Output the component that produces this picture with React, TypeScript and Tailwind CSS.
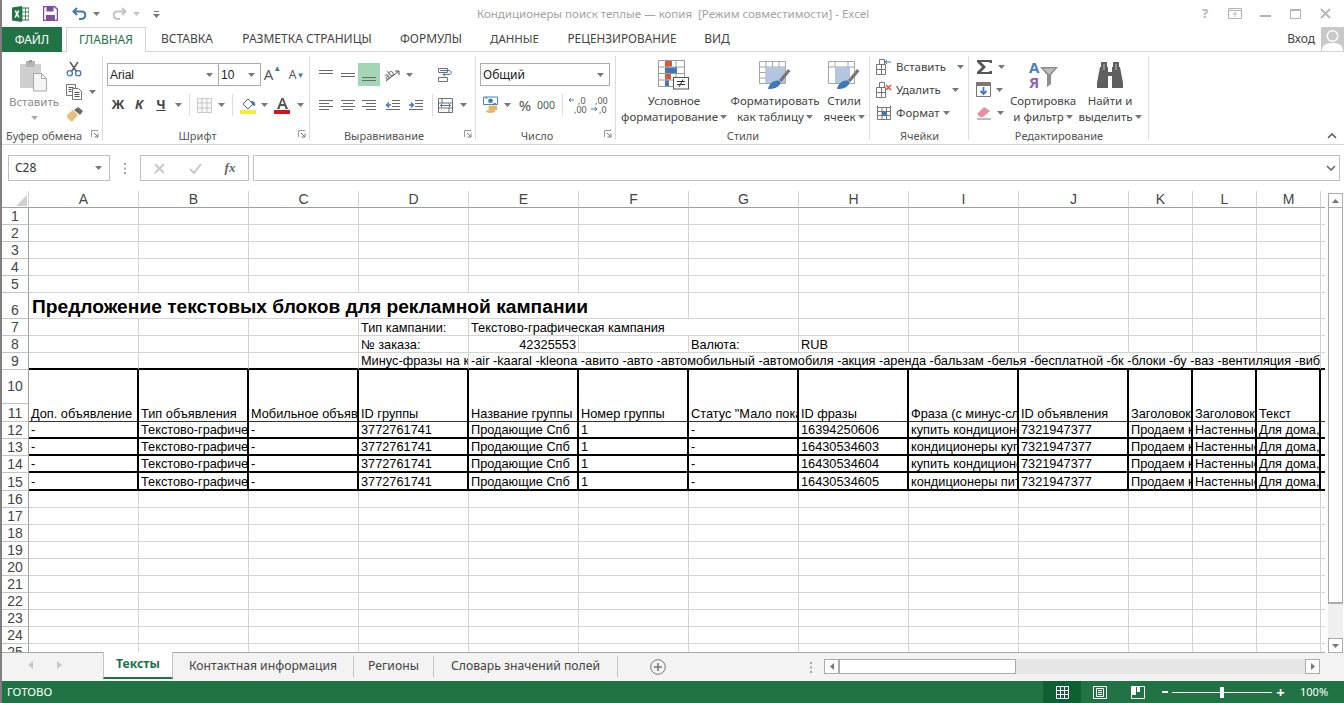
import React from 'react';

const UI = '[font-family:"Noto_Sans",sans-serif]';

const COLS = ['A', 'B', 'C', 'D', 'E', 'F', 'G', 'H', 'I', 'J', 'K', 'L', 'M'];

const HEAD_ROW = ['Доп. объявление', 'Тип объявления', 'Мобильное объявление', 'ID группы', 'Название группы', 'Номер группы', 'Статус "Мало показов"', 'ID фразы', 'Фраза (с минус-словами)', 'ID объявления', 'Заголовок 1', 'Заголовок 2', 'Текст'];
const DATA_ROWS = [
  ['-', 'Текстово-графическое', '-', '3772761741', 'Продающие Спб', '1', '-', '16394250606', 'купить кондиционер', '7321947377', 'Продаем кондиционеры', 'Настенные сплит-системы', 'Для дома, для офиса'],
  ['-', 'Текстово-графическое', '-', '3772761741', 'Продающие Спб', '1', '-', '16430534603', 'кондиционеры купить', '7321947377', 'Продаем кондиционеры', 'Настенные сплит-системы', 'Для дома, для офиса'],
  ['-', 'Текстово-графическое', '-', '3772761741', 'Продающие Спб', '1', '-', '16430534604', 'купить кондиционер', '7321947377', 'Продаем кондиционеры', 'Настенные сплит-системы', 'Для дома, для офиса'],
  ['-', 'Текстово-графическое', '-', '3772761741', 'Продающие Спб', '1', '-', '16430534605', 'кондиционеры питер', '7321947377', 'Продаем кондиционеры', 'Настенные сплит-системы', 'Для дома, для офиса'],
];

const Caret = ({ color = '#777' }: { color?: string }) => (
  <svg width="7" height="4" viewBox="0 0 7 4" className="shrink-0"><path d="M0 0h7L3.5 4z" fill={color} /></svg>
);

const Lines = ({ ys, x1 = 1, x2 = 15, color = '#6a6a6a' }: { ys: number[]; x1?: number; x2?: number; color?: string }) => (
  <svg width="16" height="16" viewBox="0 0 16 16">
    {ys.map((y, i) => <path key={i} d={`M${x1} ${y + 0.5}H${x2}`} stroke={color} />)}
  </svg>
);

const AlignH = ({ mode }: { mode: 'l' | 'c' | 'r' }) => (
  <svg width="16" height="14" viewBox="0 0 16 14">
    <path d="M1 2.5h14M1 8.5h14" stroke="#6a6a6a" />
    {mode === 'l' && <path d="M1 5.5h10M1 11.5h10" stroke="#6a6a6a" />}
    {mode === 'c' && <path d="M3 5.5h10M3 11.5h10" stroke="#6a6a6a" />}
    {mode === 'r' && <path d="M5 5.5h10M5 11.5h10" stroke="#6a6a6a" />}
  </svg>
);

const Indent = ({ out }: { out?: boolean }) => (
  <svg width="16" height="14" viewBox="0 0 16 14">
    <path d="M7 2.5h8M7 5.5h8M7 8.5h8M1 11.5h14" stroke="#6a6a6a" />
    {out ? <path d="M6 7H1.5M4 4.5 1.5 7 4 9.5" stroke="#3e7ab8" strokeWidth="1.4" fill="none" /> : <path d="M1 7h4.5M3 4.5 5.5 7 3 9.5" stroke="#3e7ab8" strokeWidth="1.4" fill="none" />}
  </svg>
);

const Launcher = () => (
  <svg width="8" height="8" viewBox="0 0 8 8"><path d="M.5 7V.5H7" stroke="#9a9a9a" fill="none" /><path d="M3 3l3.5 3.5M7 3.5V7H3.5" stroke="#777" fill="none" /></svg>
);

// one ribbon group, separator on its right edge
function Group({ className, label, launcher, labelClass = 'justify-center', children }: { className: string; label: string; launcher?: boolean; labelClass?: string; children: React.ReactNode }) {
  return (
    <div className={`relative flex flex-col shrink-0 ${className}`}>
      <div className="h-[76px]">{children}</div>
      <div className={`flex h-[16px] items-center text-[11px] text-[#555] ${labelClass}`}>{label}</div>
      {launcher && <div className="absolute right-[4px] bottom-[6px] flex"><Launcher /></div>}
      <div className="absolute right-0 top-[4px] h-[84px] w-px bg-[#dcdcdc]" />
    </div>
  );
}

const Sep = () => <div className="h-[22px] w-px bg-[#dcdcdc]" />;

function BigButton({ className, icon, line1, line2 }: { className: string; icon: React.ReactNode; line1: string; line2: string }) {
  return (
    <div className={`flex flex-col items-center pt-[8px] text-[11.500px] leading-[16px] text-[#444] ${className}`}>
      <div className="flex h-[30px] items-center justify-center">{icon}</div>
      <div className="mt-[3px] whitespace-nowrap">{line1}</div>
      <div className="flex items-center gap-[2px] whitespace-nowrap">{line2}<Caret /></div>
    </div>
  );
}

const Combo = ({ className, text }: { className: string; text: string }) => (
  <div className={`flex h-[23px] shrink-0 items-center justify-between border border-[#ababab] bg-white pl-[2px] pr-[5px] text-[12px] text-[#222] ${className}`}>
    <span>{text}</span><Caret />
  </div>
);

const CondIcon = () => (
  <svg width="32" height="30" viewBox="0 0 32 30">
    <path d="M.5.5h26v26H.5zM.5 7h26M.5 13.5h26M.5 20h26M9 .5v26M18 .5v26" fill="#fff" stroke="#9a9a9a" />
    <rect x="7" y="1" width="7" height="5.500" fill="#d9573b" />
    <rect x="7" y="7.500" width="12" height="5.500" fill="#3f78b5" />
    <rect x="7" y="14" width="6" height="5.500" fill="#d9573b" />
    <rect x="7" y="20.500" width="4" height="5.500" fill="#3f78b5" />
    <rect x="15.500" y="17.500" width="15" height="11.500" fill="#fff" stroke="#555" />
    <path d="M19 21.500h8M19 24.500h8M25 19.500l-4 7.500" stroke="#333" fill="none" />
  </svg>
);

const TableFmtIcon = ({ small }: { small?: boolean }) => (
  <svg width="32" height="30" viewBox="0 0 32 30">
    <path d="M.5 1.500h26v22H.5z" fill="#fff" stroke="#a5a5a5" />
    {!small && <path d="M.5 7h26M.5 12.500h26M.5 18h26M7 1.500v22M13.500 1.500v22M20 1.500v22" stroke="#a5a5a5" />}
    {small && <path d="M.5 7h26M7 1.500v5.500M20 1.500v5.500" stroke="#a5a5a5" />}
    <rect x="7" y="7" width={small ? 15 : 19} height="16" fill="#b3c8e0" />
    <path d="M20 20l9-11 2.500 2-9 11z" fill="#777" />
    <path d="M9 29c1-5 5-9 10-8.500 3 .5 3 3 1.500 4.500-2.500 3-7 4.500-11.500 4z" fill="#3f78b5" />
  </svg>
);

const SortIcon = () => (
  <svg width="30" height="30" viewBox="0 0 30 30">
    <text x="1" y="13" fontSize="15" fontWeight="700" fontFamily="Noto Sans" fill="#4a7fb5">A</text>
    <text x="1" y="28" fontSize="15" fontWeight="700" fontFamily="Noto Sans" fill="#8a63a8">Я</text>
    <path d="M12 7h18l-7 8v9l-4 3V15z" fill="#8c8c8c" />
    <path d="M15 8.500h12l-6 6z" fill="#bdbdbd" />
  </svg>
);

const Binoculars = () => (
  <svg width="28" height="28" viewBox="0 0 28 28" fill="#5f5f5f">
    <path d="M5 1h6v5h1v5h4V6h1V1h6v5h1l3 16v5H16V15h-4v12H1v-5L4 6h1z" />
    <path d="M7 3h2v6H7zM19 3h2v6h-2z" fill="#8e8e8e" />
  </svg>
);

const PasteIcon = () => (
  <svg width="30" height="32" viewBox="0 0 30 32">
    <path d="M1 4h21v24H1z" fill="#cfcfcf" />
    <path d="M7 1h9v6H7z" fill="#b5b5b5" />
    <path d="M10 0h3v3h-3z" fill="#9c9c9c" />
    <path d="M14.500 13.500h8l5 5v12.500h-13z" fill="#f5f5f5" stroke="#a8a8a8" />
    <path d="M22.500 13.500v5h5" fill="none" stroke="#a8a8a8" />
  </svg>
);

const Scissors = () => (
  <svg width="16" height="16" viewBox="0 0 16 16" fill="none">
    <path d="M4 1l6.500 9.500M12 1L5.500 10.500" stroke="#5a5a5a" strokeWidth="1.500" />
    <circle cx="3.800" cy="12.300" r="2.600" stroke="#3f78b5" strokeWidth="1.300" />
    <circle cx="12.200" cy="12.300" r="2.600" stroke="#3f78b5" strokeWidth="1.300" />
  </svg>
);

const CopyIcon = () => (
  <svg width="17" height="16" viewBox="0 0 17 16" fill="#fff" stroke="#777">
    <path d="M.5.5h9v11h-9z" />
    <path d="M6.500 4.500h6l3 3v8h-9z" />
    <path d="M2.500 3.500h5M2.500 5.500h3M2.500 7.500h3M8.500 8.500h5M8.500 10.500h5M8.500 12.500h5" stroke="#555" fill="none" />
  </svg>
);

const BrushIcon = () => (
  <svg width="17" height="16" viewBox="0 0 17 16">
    <path d="M1 8l6-5 5 5-5 6c-2 1-3 0-3.500-1.500C2.500 12 .5 11 1 8z" fill="#e6bf7d" />
    <path d="M8 3l4-3 5 4-3 4z" fill="#6b6b6b" />
  </svg>
);

const Orient = () => (
  <svg width="18" height="16" viewBox="0 0 18 16" fill="none">
    <text x="0" y="10" fontSize="9" fontFamily="Noto Sans" fill="#555" transform="rotate(-38 6 8)">ab</text>
    <path d="M2 14L15 4M15 4h-4M15 4v4" stroke="#555" />
  </svg>
);

const WrapIcon = () => (
  <svg width="15" height="16" viewBox="0 0 15 16" fill="none" stroke="#707070">
    <path d="M.5 1.500h9v4h-9zM.5 10.500h9v4h-9z" fill="#fff" />
    <path d="M2 3.500h9c3 0 3 4 0 4H5M7 5.500 5 7.500l2 2" stroke="#3f78b5" />
  </svg>
);

const MergeIcon = () => (
  <svg width="15" height="15" viewBox="0 0 15 15" fill="none" stroke="#707070">
    <path d="M.5.5h14v14H.5zM.5 5h14M.5 10h14M4 .5v4.500M11 10v4.500" />
    <path d="M2 7.500h11M4.500 5.500l-2 2 2 2M10.500 5.500l2 2-2 2" stroke="#3f78b5" />
  </svg>
);

const Currency = () => (
  <svg width="17" height="18" viewBox="0 0 17 18">
    <path d="M.5.500h15v8H.5z" fill="#fff" stroke="#3f78b5" />
    <circle cx="8" cy="4.500" r="2.500" fill="#3f78b5" />
    <path d="M2 1.500h3M11 7.500h3" stroke="#3f78b5" />
    <ellipse cx="10.500" cy="11" rx="5" ry="1.500" fill="#e5b662" />
    <ellipse cx="10.500" cy="13.500" rx="5" ry="1.500" fill="#e5b662" />
    <ellipse cx="8" cy="16" rx="5" ry="1.500" fill="#e5b662" />
  </svg>
);

const DecimalIcon = ({ more }: { more?: boolean }) => (
  <svg width="20" height="18" viewBox="0 0 20 18">
    <text x={more ? 10 : 6} y="8" fontSize="9" fontFamily="Noto Sans" fill="#555">{more ? ',0' : ',00'}</text>
    <text x={more ? 6 : 10} y="17" fontSize="9" fontFamily="Noto Sans" fill="#555">{more ? ',00' : ',0'}</text>
    {more ? <path d="M6 4H1M3 2 1 4l2 2" stroke="#3f78b5" fill="none" /> : <path d="M2 13h6M6 11l2 2-2 2" stroke="#3f78b5" fill="none" />}
  </svg>
);

const CellIcon = ({ kind }: { kind: 'ins' | 'del' | 'fmt' }) => (
  <svg width="16" height="16" viewBox="0 0 16 16" fill="none" stroke="#777">
    {kind === 'fmt' ? (
      <>
        <path d="M1.500 2.500h13v12h-13zM1.500 6.500h13M1.500 10.500h13M6 2.500v12M10.500 2.500v12" />
        <rect x="6" y="6.500" width="4.500" height="4" fill="#3f78b5" stroke="none" />
        <path d="M1.500 .5v2M14.500 .5v2" />
      </>
    ) : (
      <>
        <path d="M3.500.5h5v5h-5zM.5 5.500h5v5h-5zM.5 10.500h5v5h-5zM5.500 5.500h4v5h-4zM5.500 10.500h4v5h-4z" />
        {kind === 'ins' && <path d="M15 3H9M11 1 9 3l2 2" stroke="#3f78b5" />}
        {kind === 'del' && <path d="M10 3l5 5M15 3l-5 5" stroke="#d9573b" strokeWidth="1.500" />}
      </>
    )}
  </svg>
);

const SheetTab = ({ text, className }: { text: string; className: string }) => (
  <div className={`flex h-[21px] items-center justify-center border-r border-[#c6c6c6] whitespace-nowrap ${className}`}>{text}</div>
);

function Ribbon() {
  return (
    <div className={`flex h-[93px] shrink-0 border-b border-[#d4d4d4] ${UI}`}>
      <Group className="w-[101px]" label="Буфер обмена" launcher labelClass="justify-start pl-[4px]">
        <div className="flex">
          <div className="flex w-[64px] flex-col items-center pt-[8px] text-[11.500px] leading-[16px] text-[#8a8a8a]">
            <PasteIcon />
            <div className="mt-[2px]">Вставить</div>
            <div className="mt-[6px]"><Caret color="#aaa" /></div>
          </div>
          <div className="flex flex-col pt-[5px]">
            <div className="flex h-[23px] items-center"><Scissors /></div>
            <div className="flex h-[23px] items-center gap-[6px]"><CopyIcon /><Caret /></div>
            <div className="flex h-[23px] items-center"><BrushIcon /></div>
          </div>
        </div>
      </Group>

      <Group className="w-[207px]" label="Шрифт" launcher labelClass="justify-center pr-[18px]">
        <div className="flex items-center pl-[4px] pt-[11px]">
          <Combo className="w-[112px] [font-family:'Liberation_Sans',sans-serif]" text="Arial" />
          <Combo className="-ml-px w-[43px] [font-family:'Liberation_Sans',sans-serif]" text="10" />
          <div className="flex w-[23px] justify-center text-[15px] text-[#555]">A<span className="-mt-[1px] text-[8px] text-[#3f78b5]">▲</span></div>
          <div className="flex w-[23px] justify-center pl-[2px] text-[12px] leading-[18px] text-[#555]">A<span className="text-[8px] text-[#3f78b5]">▼</span></div>
        </div>
        <div className="mt-[9px] flex h-[20px] items-center pl-[5px] text-[#444]">
          <div className="w-[20px] text-center text-[13px] font-bold">Ж</div>
          <div className="w-[22px] text-center text-[13px] font-bold italic">К</div>
          <div className="w-[22px] text-center text-[13px] font-bold underline">Ч</div>
          <div className="flex w-[12px] justify-center"><Caret /></div>
          <div className="flex w-[10px] justify-center"><Sep /></div>
          <div className="flex w-[20px] justify-center">
            <svg width="15" height="15" viewBox="0 0 15 15"><path d="M.5.5h14v14H.5zM5 .5v14M10 .5v14M.5 5h14M.5 10h14" fill="#f8f8f8" stroke="#9a9a9a" strokeDasharray="1 1" /></svg>
          </div>
          <div className="flex w-[14px] justify-center"><Caret /></div>
          <div className="flex w-[8px] justify-center"><Sep /></div>
          <div className="flex w-[24px] justify-center">
            <svg width="17" height="17" viewBox="0 0 17 17"><path d="M3 7l5-5 5 5-5 5z" fill="#fff" stroke="#666" /><path d="M11 4c3 0 5 2 4 5l-3-1z" fill="#3f78b5" /><rect x="0" y="13" width="16" height="4" fill="#f5ee35" /></svg>
          </div>
          <div className="flex w-[8px] justify-center"><Caret /></div>
          <div className="flex w-[28px] justify-center">
            <svg width="17" height="17" viewBox="0 0 17 17"><path d="M3 12L7.500 1h2L14 12h-2.500l-1-3h-4l-1 3zM7 7h3L8.500 3z" fill="#555" fillRule="evenodd" /><rect x="0" y="13" width="16" height="4" fill="#d01818" /></svg>
          </div>
          <div className="flex w-[8px] justify-center"><Caret /></div>
        </div>
      </Group>

      <Group className="w-[166px]" label="Выравнивание" launcher labelClass="justify-center pr-[18px]">
        <div className="flex items-center pl-[5px] pt-[11px]">
          <div className="flex h-[23px] w-[22px] items-center justify-center"><Lines ys={[3, 6]} /></div>
          <div className="flex h-[23px] w-[21px] items-center justify-center"><Lines ys={[6, 9]} /></div>
          <div className="flex h-[23px] w-[22px] items-center justify-center bg-[#a3d5b6]"><Lines ys={[10, 13]} /></div>
          <div className="flex h-[23px] w-[25px] items-center justify-center"><Orient /></div>
          <div className="flex w-[8px] justify-center"><Caret /></div>
          <div className="flex w-[40px] justify-end"><WrapIcon /></div>
        </div>
        <div className="mt-[9px] flex h-[20px] items-center pl-[5px]">
          <div className="flex w-[22px] justify-center"><AlignH mode="l" /></div>
          <div className="flex w-[21px] justify-center"><AlignH mode="c" /></div>
          <div className="flex w-[22px] justify-center"><AlignH mode="r" /></div>
          <div className="flex w-[25px] justify-center"><Indent out /></div>
          <div className="flex w-[22px] justify-center"><Indent /></div>
          <div className="flex w-[10px] justify-center"><Sep /></div>
          <div className="flex w-[16px] justify-center"><MergeIcon /></div>
          <div className="flex w-[20px] justify-center"><Caret /></div>
        </div>
      </Group>

      <Group className="w-[140px]" label="Число" launcher labelClass="justify-center pr-[18px]">
        <div className="pl-[4px] pt-[11px]"><Combo className="w-[130px]" text="Общий" /></div>
        <div className="mt-[9px] flex h-[20px] items-center pl-[7px] text-[#555]">
          <div className="flex w-[16px] justify-center"><Currency /></div>
          <div className="flex w-[16px] justify-center"><Caret /></div>
          <div className="w-[20px] text-center text-[15px] leading-[20px]">%</div>
          <div className="w-[22px] text-center text-[10.500px] leading-[20px]">000</div>
          <div className="flex w-[10px] justify-center"><Sep /></div>
          <div className="flex w-[21px] justify-center"><DecimalIcon more /></div>
          <div className="flex w-[21px] justify-center"><DecimalIcon /></div>
        </div>
      </Group>

      <Group className="w-[254px]" label="Стили">
        <div className="flex pl-[4px]">
          <BigButton className="w-[108px]" icon={<CondIcon />} line1="Условное" line2="форматирование" />
          <BigButton className="w-[94px]" icon={<TableFmtIcon />} line1="Форматировать" line2="как таблицу" />
          <BigButton className="w-[44px]" icon={<TableFmtIcon small />} line1="Стили" line2="ячеек" />
        </div>
      </Group>

      <Group className="w-[99px]" label="Ячейки">
        <div className="flex flex-col pl-[6px] pt-[3px] text-[11.500px] text-[#444]">
          <div className="flex h-[23px] items-center"><CellIcon kind="ins" /><span className="ml-[4px]">Вставить</span><span className="ml-[11px]"><Caret /></span></div>
          <div className="flex h-[23px] items-center"><CellIcon kind="del" /><span className="ml-[4px]">Удалить</span><span className="ml-[11px]"><Caret /></span></div>
          <div className="flex h-[23px] items-center"><CellIcon kind="fmt" /><span className="ml-[4px]">Формат</span><span className="ml-[3px]"><Caret /></span></div>
        </div>
      </Group>

      <Group className="w-[180px]" label="Редактирование">
        <div className="flex">
          <div className="flex w-[39px] flex-col pl-[7px] pt-[3px]">
            <div className="flex h-[23px] items-center gap-[5px]">
              <svg width="17" height="16" viewBox="0 0 17 16"><path d="M1 1h15v3h-2l-1-1H5l5 5-5 5h8l1-1h2v3H1v-2l5-5-5-5z" fill="#555" /></svg>
              <Caret />
            </div>
            <div className="flex h-[23px] items-center gap-[5px]">
              <svg width="15" height="15" viewBox="0 0 15 15"><path d="M.5.5h14v14H.5z" fill="#fff" stroke="#777" /><path d="M1 1h13v3H1z" fill="#777" /><path d="M7.500 5v7M4.500 9l3 3 3-3" stroke="#3f78b5" strokeWidth="1.800" fill="none" /></svg>
              <Caret />
            </div>
            <div className="flex h-[23px] items-center gap-[5px]">
              <svg width="16" height="15" viewBox="0 0 16 15"><path d="M1 9l7-7 6 4-7 6H4z" fill="#ea8d9d" /><path d="M1 14h14" stroke="#777" /></svg>
              <Caret />
            </div>
          </div>
          <BigButton className="w-[70px]" icon={<SortIcon />} line1="Сортировка" line2="и фильтр" />
          <BigButton className="w-[64px]" icon={<Binoculars />} line1="Найти и" line2="выделить" />
        </div>
      </Group>

      <div className="flex flex-1 items-end justify-end pb-[5px] pr-[7px]">
        <svg width="10" height="6" viewBox="0 0 10 6"><path d="M1 5l4-4 4 4" stroke="#555" strokeWidth="1.500" fill="none" /></svg>
      </div>
    </div>
  );
}

function Sheet() {
  const cell = 'h-[17px] overflow-hidden whitespace-nowrap border-r border-b border-[#d4d4d4] px-[2px] align-bottom leading-[14px]';
  const rowHead = 'overflow-hidden border-r border-b border-[#c4c4c4] border-r-[#9f9f9f] p-0 text-center align-bottom text-[14px] font-normal leading-[16px] text-[#444]';
  const blank = (n: number) => COLS.slice(0, n).map((c) => <td key={c} className={cell} />);
  const thick = 'overflow-hidden whitespace-nowrap border-r-2 border-r-black px-[2px] align-bottom leading-[14px]';

  return (
    <table className="w-[1323px] table-fixed border-separate border-spacing-0 text-[12.750px] text-black [font-family:'Liberation_Sans',sans-serif]">
      <colgroup>
        <col className="w-[27px]" />
        {COLS.slice(0, 10).map((c) => <col key={c} className="w-[110px]" />)}
        <col className="w-[64px]" /><col className="w-[64px]" /><col className="w-[64px]" />
        <col className="w-[4px]" />
      </colgroup>
      <thead>
        <tr className="h-[17px]">
          <th className="border-r border-b border-[#9f9f9f] border-r-[#d4d4d4] p-0 align-bottom">
            <div className="flex justify-end pb-[1px] pr-[1px]"><svg width="11" height="11" viewBox="0 0 11 11"><path d="M11 0v11H0z" fill="#d0d0d0" /></svg></div>
          </th>
          {COLS.map((c) => <th key={c} className="border-r border-b border-r-[#d4d4d4] border-b-[#9f9f9f] p-0 text-center text-[14px] font-normal leading-[16px] text-[#444]">{c}</th>)}
          <th className="border-b border-[#9f9f9f] p-0" />
        </tr>
      </thead>
      <tbody>
        {[1, 2, 3, 4, 5].map((n) => (
          <tr key={n} className="h-[17px]"><th className={rowHead}>{n}</th>{blank(13)}<td className="border-b border-[#d4d4d4]" /></tr>
        ))}
        <tr className="h-[26px]">
          <th className={rowHead}>6</th>
          <td colSpan={6} className="overflow-hidden whitespace-nowrap border-r border-b border-[#d4d4d4] pl-[3px] align-bottom text-[19.200px] font-bold leading-[22px]">Предложение текстовых блоков для рекламной кампании</td>
          {COLS.slice(6).map((c) => <td key={c} className={cell} />)}
          <td className="border-b border-[#d4d4d4]" />
        </tr>
        <tr className="h-[17px]">
          <th className={rowHead}>7</th>
          {blank(3)}
          <td className={cell}>Тип кампании:</td>
          <td colSpan={3} className={cell}>Текстово-графическая кампания</td>
          {COLS.slice(7).map((c) => <td key={c} className={cell} />)}
          <td className="border-b border-[#d4d4d4]" />
        </tr>
        <tr className="h-[17px]">
          <th className={rowHead}>8</th>
          {blank(3)}
          <td className={cell}>№ заказа:</td>
          <td className={`${cell} text-right`}>42325553</td>
          <td className={cell} />
          <td className={cell}>Валюта:</td>
          <td className={cell}>RUB</td>
          {COLS.slice(8).map((c) => <td key={c} className={cell} />)}
          <td className="border-b border-[#d4d4d4]" />
        </tr>
        <tr className="h-[17px]">
          <th className="overflow-hidden border-r border-b border-[#c4c4c4] border-r-[#9f9f9f] p-0 text-center align-bottom text-[14px] font-normal leading-[15px] text-[#444]">9</th>
          {COLS.slice(0, 3).map((c) => <td key={c} className="h-[17px] border-r border-r-[#d4d4d4] border-b-2 border-b-black" />)}
          <td className="h-[17px] overflow-hidden whitespace-nowrap border-r border-r-[#d4d4d4] border-b-2 border-b-black px-[2px] align-bottom leading-[14px]">Минус-фразы на ключевые слова</td>
          <td colSpan={9} className="h-[17px] overflow-hidden whitespace-nowrap border-r border-r-[#d4d4d4] border-b-2 border-b-black px-[2px] align-bottom leading-[14px]">-air -kaaral -kleona -авито -авто -автомобильный -автомобиля -акция -аренда -бальзам -белья -бесплатной -бк -блоки -бу -ваз -вентиляция -вибрация -видео -водный -вода</td>
          <td className="border-b-2 border-b-black" />
        </tr>
        <tr className="h-[34px]">
          <th className="border-r border-b border-[#c4c4c4] border-r-[#9f9f9f] p-0 text-center text-[14px] font-normal text-[#444]">10</th>
          {COLS.map((c) => <td key={c} className={thick} />)}
          <td />
        </tr>
        <tr className="h-[18px]">
          <th className="border-r border-b border-[#c4c4c4] border-r-[#9f9f9f] p-0 text-center align-bottom text-[14px] font-normal leading-[16px] text-[#444]">11</th>
          {HEAD_ROW.map((t) => <td key={t} className={`${thick} border-b border-b-[#333]`}>{t}</td>)}
          <td className="border-b border-b-[#333]" />
        </tr>
        {DATA_ROWS.map((row, r) => (
          <tr key={r} className={r === 3 ? 'h-[18px]' : 'h-[17px]'}>
            <th className={rowHead}>{12 + r}</th>
            {row.map((t, i) => <td key={i} className={`${thick} border-b-2 border-b-black`}>{t}</td>)}
            <td className="border-b-2 border-b-black" />
          </tr>
        ))}
        {[16, 17, 18, 19, 20, 21, 22, 23, 24, 25].map((n) => (
          <tr key={n} className="h-[17px]"><th className={rowHead}>{n}</th>{blank(13)}<td className="border-b border-[#d4d4d4]" /></tr>
        ))}
      </tbody>
    </table>
  );
}

export default function App() {
  return (
    <div className={`relative flex h-[703px] w-[1344px] flex-col overflow-hidden border-l-2 border-l-[#7f7f7f] bg-white text-[#444] ${UI}`}>
      <div className="absolute -left-[2px] top-0 h-[30px] w-[2px] bg-[#5b7fa8]" />

      {/* title bar */}
      <div className="relative flex h-[27px] shrink-0 items-center">
        <div className="ml-[10px] flex w-[31px]">
          <svg width="17" height="16" viewBox="0 0 17 16">
            <rect x="7" y="2" width="10" height="12" fill="#fff" stroke="#217346" />
            <path d="M10 2v12M13.500 2v12M7 6h10M7 10h10" stroke="#217346" strokeWidth=".8" />
            <path d="M0 1.500 10 0v16L0 14.500z" fill="#217346" />
            <path d="M2.500 4.500h1.800L5 6.500l.9-2h1.700L6 8l1.700 3.500H6L5 9.300 4 11.500H2.300L4 8z" fill="#fff" />
          </svg>
        </div>
        <div className="flex w-[29px]">
          <svg width="15" height="15" viewBox="0 0 15 15"><path d="M.5.500h11l3 3v11H.5z" fill="#fff" stroke="#7d4f9a" strokeWidth="1.500" /><rect x="3.500" y="1" width="7" height="4.500" fill="#7d4f9a" /><rect x="3" y="9" width="9" height="5" fill="#7d4f9a" /></svg>
        </div>
        <div className="flex w-[40px] items-center gap-[6px]">
          <svg width="15" height="13" viewBox="0 0 15 13" fill="none"><path d="M5 1L1.500 4.500 5 8M2 4.500h7.500c5 0 5 7 0 7.500H7" stroke="#3f78b5" strokeWidth="2" /></svg>
          <Caret />
        </div>
        <div className="flex w-[41px] items-center gap-[6px]">
          <svg width="15" height="13" viewBox="0 0 15 13" fill="none"><path d="M10 1l3.500 3.500L10 8M13 4.500H5.500c-5 0-5 7 0 7.500H8" stroke="#c4c4c4" strokeWidth="2" /></svg>
          <Caret color="#c4c4c4" />
        </div>
        <svg width="7" height="8" viewBox="0 0 7 8"><path d="M1 1.500h5" stroke="#777" /><path d="M0 4h7L3.500 8z" fill="#777" /></svg>

        <div className="absolute left-[475px] top-[5px] whitespace-pre text-[11.500px] text-[#a3a3a3]">Кондиционеры поиск теплые — копия  [Режим совместимости] - Excel</div>

        <div className="ml-auto flex items-center pr-[4px]">
          <div className="w-[30px] text-center text-[13px] font-bold text-[#b4b4b4]">?</div>
          <div className="flex w-[30px] justify-center">
            <svg width="14" height="11" viewBox="0 0 14 11" fill="none" stroke="#b4b4b4"><path d="M.5.500h13v10H.5zM1 2.500h12M7 9V4.500M5 6.500l2-2 2 2" /></svg>
          </div>
          <div className="flex w-[30px] justify-center"><div className="h-[2px] w-[11px] translate-y-[2px] bg-[#b4b4b4]" /></div>
          <div className="flex w-[30px] justify-center"><div className="h-[10px] w-[11px] border border-t-2 border-[#b4b4b4]" /></div>
          <div className="flex w-[30px] justify-center">
            <svg width="11" height="11" viewBox="0 0 11 11"><path d="M1 1l9 9M10 1l-9 9" stroke="#b4b4b4" strokeWidth="1.800" /></svg>
          </div>
        </div>
      </div>

      {/* tabs */}
      <div className="flex h-[25px] shrink-0 border-b border-[#d4d4d4] text-[12px]">
        <div className="flex h-[25px] w-[60px] items-center justify-center bg-[#217346] text-white">ФАЙЛ</div>
        <div className="ml-[4px] flex h-[25px] w-[80px] items-center justify-center border-x border-t border-[#d4d4d4] bg-white text-[#217346]">ГЛАВНАЯ</div>
        <div className="flex w-[82px] items-center justify-center whitespace-nowrap">ВСТАВКА</div>
        <div className="flex w-[158px] items-center justify-center whitespace-nowrap">РАЗМЕТКА СТРАНИЦЫ</div>
        <div className="flex w-[90px] items-center justify-center whitespace-nowrap">ФОРМУЛЫ</div>
        <div className="flex w-[77px] items-center justify-center whitespace-nowrap text-[11.500px]">ДАННЫЕ</div>
        <div className="flex w-[138px] items-center justify-center whitespace-nowrap text-[11.800px]">РЕЦЕНЗИРОВАНИЕ</div>
        <div className="flex w-[52px] items-center justify-center whitespace-nowrap">ВИД</div>
        <div className="ml-auto flex items-center gap-[6px]">
          <span>Вход</span>
          <svg width="23" height="24" viewBox="0 0 23 24"><rect width="23" height="24" fill="#c9c9c9" /><circle cx="11.500" cy="9" r="6" fill="#fff" /><path d="M1 24c0-6 4-8 10.500-8S22 18 22 24z" fill="#fff" /><circle cx="11.500" cy="9" r="4.500" fill="#c9c9c9" /></svg>
        </div>
      </div>

      <Ribbon />

      {/* formula bar */}
      <div className="flex h-[46px] shrink-0 items-start pl-[6px] pt-[10px]">
        <div className="flex h-[26px] w-[102px] items-center justify-between border border-[#c0c0c0] pl-[6px] pr-[7px] text-[12px] text-[#333]">C28<Caret /></div>
        <div className="flex h-[26px] w-[30px] items-center justify-center">
          <svg width="3" height="11" viewBox="0 0 3 11" fill="#a5a5a5"><rect width="2" height="2" y="0" /><rect width="2" height="2" y="4.500" /><rect width="2" height="2" y="9" /></svg>
        </div>
        <div className="flex h-[26px] w-[109px] items-center border border-[#c0c0c0]">
          <div className="flex w-[37px] justify-center"><svg width="11" height="11" viewBox="0 0 11 11"><path d="M1 1l9 9M10 1l-9 9" stroke="#c8c8c8" strokeWidth="1.800" /></svg></div>
          <div className="flex w-[34px] justify-center"><svg width="13" height="11" viewBox="0 0 13 11"><path d="M1 6l4 4 7-9" stroke="#c8c8c8" strokeWidth="2" fill="none" /></svg></div>
          <div className="w-[36px] text-center text-[13px] font-bold italic text-[#666] [font-family:'Liberation_Serif',serif]">fx</div>
        </div>
        <div className="ml-[4px] flex h-[26px] w-[1087px] items-center justify-end border border-[#c0c0c0] pr-[3px]">
          <svg width="10" height="6" viewBox="0 0 10 6"><path d="M1 1l4 4 4-4" stroke="#666" strokeWidth="1.600" fill="none" /></svg>
        </div>
      </div>

      {/* grid + vertical scrollbar */}
      <div className="flex h-[462px] shrink-0">
        <div className="h-[462px] w-[1323px] shrink-0 overflow-hidden border-b border-[#a5a5a5]"><Sheet /></div>
        <div className="ml-[3px] flex w-[15px] flex-col pt-[2px]">
          <div className="flex h-[15px] items-center justify-center border border-[#ababab]"><svg width="7" height="4" viewBox="0 0 7 4"><path d="M0 4h7L3.500 0z" fill="#777" /></svg></div>
          <div className="h-[396px] border-x border-b-2 border-[#ababab] bg-white" />
          <div className="h-[34px] bg-[#f0f0f0]" />
          <div className="flex h-[15px] items-center justify-center border border-[#ababab]"><Caret /></div>
        </div>
      </div>

      {/* sheet tabs */}
      <div className="flex h-[28px] shrink-0 items-start bg-[#f3f3f3] text-[12.200px]">
        <div className="flex h-[27px] w-[101px] items-center gap-[24px] pl-[26px] pb-[3px]">
          <svg width="5" height="8" viewBox="0 0 5 8"><path d="M5 0v8L0 4z" fill="#c8c8c8" /></svg>
          <svg width="5" height="8" viewBox="0 0 5 8"><path d="M0 0v8l5-4z" fill="#c8c8c8" /></svg>
        </div>
        <div className="-mt-px flex h-[27px] w-[70px] items-center justify-center border-x border-[#c6c6c6] border-b-2 border-b-[#217346] bg-white font-bold text-[#217346]">Тексты</div>
        <div className="mt-[3px] flex items-center">
          <SheetTab className="w-[181px]" text="Контактная информация" />
          <SheetTab className="w-[80px]" text="Регионы" />
          <SheetTab className="w-[184px]" text="Словарь значений полей" />
        </div>
        <div className="ml-[32px] mt-[6px] flex">
          <svg width="16" height="16" viewBox="0 0 16 16" fill="none" stroke="#777"><circle cx="8" cy="8" r="7.300" /><path d="M8 4v8M4 8h8" strokeWidth="1.600" /></svg>
        </div>
        <div className="ml-[144px] mt-[9px] flex">
          <svg width="3" height="11" viewBox="0 0 3 11" fill="#a5a5a5"><rect width="2" height="2" y="0" /><rect width="2" height="2" y="4.500" /><rect width="2" height="2" y="9" /></svg>
        </div>
        <div className="ml-[11px] mt-[6px] flex h-[15px] w-[496px]">
          <div className="flex w-[15px] items-center justify-center border border-[#ababab] bg-white"><svg width="4" height="7" viewBox="0 0 4 7"><path d="M4 0v7L0 3.500z" fill="#777" /></svg></div>
          <div className="w-[177px] border border-[#ababab] bg-white" />
          <div className="flex-1 bg-[#e6e6e6]" />
          <div className="flex w-[15px] items-center justify-center border border-[#ababab] bg-white"><svg width="4" height="7" viewBox="0 0 4 7"><path d="M0 0v7l4-3.500z" fill="#777" /></svg></div>
        </div>
      </div>

      {/* status bar */}
      <div className="flex h-[22px] shrink-0 items-center bg-[#217346] text-[11.500px] text-white">
        <span className="pl-[5px]">ГОТОВО</span>
        <div className="ml-auto flex h-[22px] items-center pr-[18px]">
          <div className="flex h-[22px] w-[38px] items-center justify-center bg-[#0f5f33]">
            <svg width="13" height="13" viewBox="0 0 13 13" fill="none" stroke="#fff"><path d="M.5.500h12v12H.5zM.5 4.500h12M.5 8.500h12M4.500 .5v12M8.500 .5v12" /></svg>
          </div>
          <div className="flex w-[38px] justify-center">
            <svg width="14" height="13" viewBox="0 0 14 13" fill="none" stroke="#fff"><path d="M.5.500h13v12H.5zM3.500 2.500h7v8h-7zM5 4.500h4M5 6.500h4M5 8.500h4" /></svg>
          </div>
          <div className="flex w-[38px] justify-center">
            <svg width="14" height="13" viewBox="0 0 14 13"><path d="M.5.500h13v12H.5z" fill="none" stroke="#fff" /><path d="M1 1h4v8H1zM6 1h3v5H6z" fill="#fff" /></svg>
          </div>
          <div className="ml-[5px] h-[2px] w-[6px] bg-white" />
          <div className="ml-[4px] flex h-[10px] w-[100px] items-center justify-center">
            <div className="relative h-px w-[100px] bg-white"><div className="absolute left-[48px] -top-[5px] h-[11px] w-[4px] bg-white" /></div>
          </div>
          <div className="ml-[4px] w-[9px] text-center text-[15px] font-bold leading-none">+</div>
          <div className="ml-[15px] w-[26px] whitespace-nowrap text-[11px]">100%</div>
        </div>
      </div>
    </div>
  );
}
